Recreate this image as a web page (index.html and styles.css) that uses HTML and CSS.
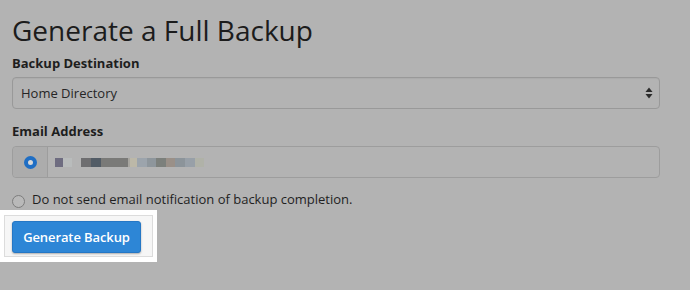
FILE: index.html
```html
<!DOCTYPE html>
<html lang="en">
<head>
<meta charset="utf-8">
<title>Generate a Full Backup</title>
<link rel="stylesheet" href="styles.css">
</head>
<body>
<main class="page">
  <h1 class="title">Generate a Full Backup</h1>
  <label class="field-label" for="dest">Backup Destination</label>
  <div class="select" id="dest">
    <span class="select-value">Home Directory</span>
    <svg class="select-arrows" width="8" height="12" viewBox="0 0 8 12" aria-hidden="true">
      <path d="M4 0.5 L7.5 5 L0.5 5 Z" fill="#2a2a2a"/>
      <path d="M4 11.5 L7.5 7 L0.5 7 Z" fill="#2a2a2a"/>
    </svg>
  </div>
  <label class="field-label label-email">Email Address</label>
  <div class="input-group">
    <span class="addon"><span class="radio radio-on"></span></span>
    <span class="input"><span class="blurred" aria-label="email hidden"></span></span>
  </div>
  <div class="option">
    <span class="radio"></span>
    <span class="option-text">Do not send email notification of backup completion.</span>
  </div>
  <div class="spot">
    <div class="spot-inner">
      <button class="btn" type="button">Generate Backup</button>
    </div>
  </div>
</main>
</body>
</html>
```

FILE: styles.css
```css
html, body {
  margin: 0;
  padding: 0;
  background: #b3b3b3;
}
body {
  font-family: "Open Sans", "Liberation Sans", sans-serif;
  color: #1f1f1f;
}
.page {
  padding: 0 30px 0 12px;
  display: flex;
  flex-direction: column;
  align-items: stretch;
}
.title {
  margin: 13px 0 0;
  font-size: 28px;
  line-height: 34px;
  font-weight: 400;
  color: #1c1c1c;
}
.field-label {
  display: block;
  margin-top: 7px;
  font-size: 13px;
  line-height: 18px;
  font-weight: 700;
  color: #1e1e1e;
}
.label-email {
  margin-top: 13px;
}
.select {
  margin-top: 5px;
  height: 30px;
  border: 1px solid #999999;
  border-radius: 4px;
  display: flex;
  align-items: center;
  justify-content: space-between;
  padding: 0 6px 0 8px;
  box-shadow: inset 0 1px 1px rgba(0,0,0,0.04);
}
.select-value {
  font-size: 13px;
  color: #262626;
}
.select-arrows {
  display: block;
}
.input-group {
  margin-top: 6px;
  height: 30px;
  border: 1px solid #9d9d9d;
  border-radius: 4px;
  display: flex;
}
.addon {
  width: 34px;
  background: #acacac;
  border-right: 1px solid #9d9d9d;
  border-radius: 4px 0 0 4px;
  display: flex;
  align-items: center;
  justify-content: center;
}
.input {
  flex: 1;
  display: flex;
  align-items: center;
  padding-left: 7px;
}
.blurred {
  display: block;
  width: 149px;
  height: 9px;
  background: linear-gradient(to right,
    #6e6c80 0, #6e6c80 8px,
    #b9bcbc 8px, #b9bcbc 17px,
    #b3b3b3 17px, #b3b3b3 26px,
    #6e6e70 26px, #6e6e70 36px,
    #525c66 36px, #525c66 46px,
    #7a7a78 46px, #7a7a78 73px,
    #a8a6a0 73px, #a8a6a0 75px,
    #bcb8a8 75px, #bcb8a8 82px,
    #9ca4ac 82px, #9ca4ac 92px,
    #8e969c 92px, #8e969c 101px,
    #7c807c 101px, #7c807c 111px,
    #9a9088 111px, #9a9088 120px,
    #8c949a 120px, #8c949a 130px,
    #98a0a8 130px, #98a0a8 140px,
    #b0b2a8 140px, #b0b2a8 149px);
}
.radio {
  box-sizing: border-box;
  width: 13px;
  height: 13px;
  border-radius: 50%;
  border: 1px solid #7d7d7d;
  background: #b9b9b9;
  flex: none;
}
.radio-on {
  border: 4px solid #1f6ec4;
  background: #d8d8d8;
}
.option {
  margin-top: 12px;
  display: flex;
  align-items: center;
  gap: 7px;
  height: 18px;
}
.option-text {
  font-size: 13px;
  line-height: 18px;
  color: #1f1f1f;
}
.option .radio {
  position: relative;
  top: 2px;
}
.spot {
  margin: 2px 0 0 -12px;
  width: 149px;
  padding: 5px 4px 5px 4px;
  background: #ffffff;
}
.spot-inner {
  border: 1px solid #dcdcdc;
  background: #f6f6f6;
  padding: 5px 7px 3px 7px;
}
.btn {
  display: block;
  height: 32px;
  width: 129px;
  padding: 0;
  border: 1px solid #2577c5;
  border-radius: 3px;
  background: #2d86d6;
  color: #ffffff;
  font-family: "Open Sans", "Liberation Sans", sans-serif;
  font-size: 13px;
  font-weight: 600;
  letter-spacing: -0.1px;
  box-shadow: 0 1px 2px rgba(0,0,0,0.3);
  cursor: pointer;
}
```
